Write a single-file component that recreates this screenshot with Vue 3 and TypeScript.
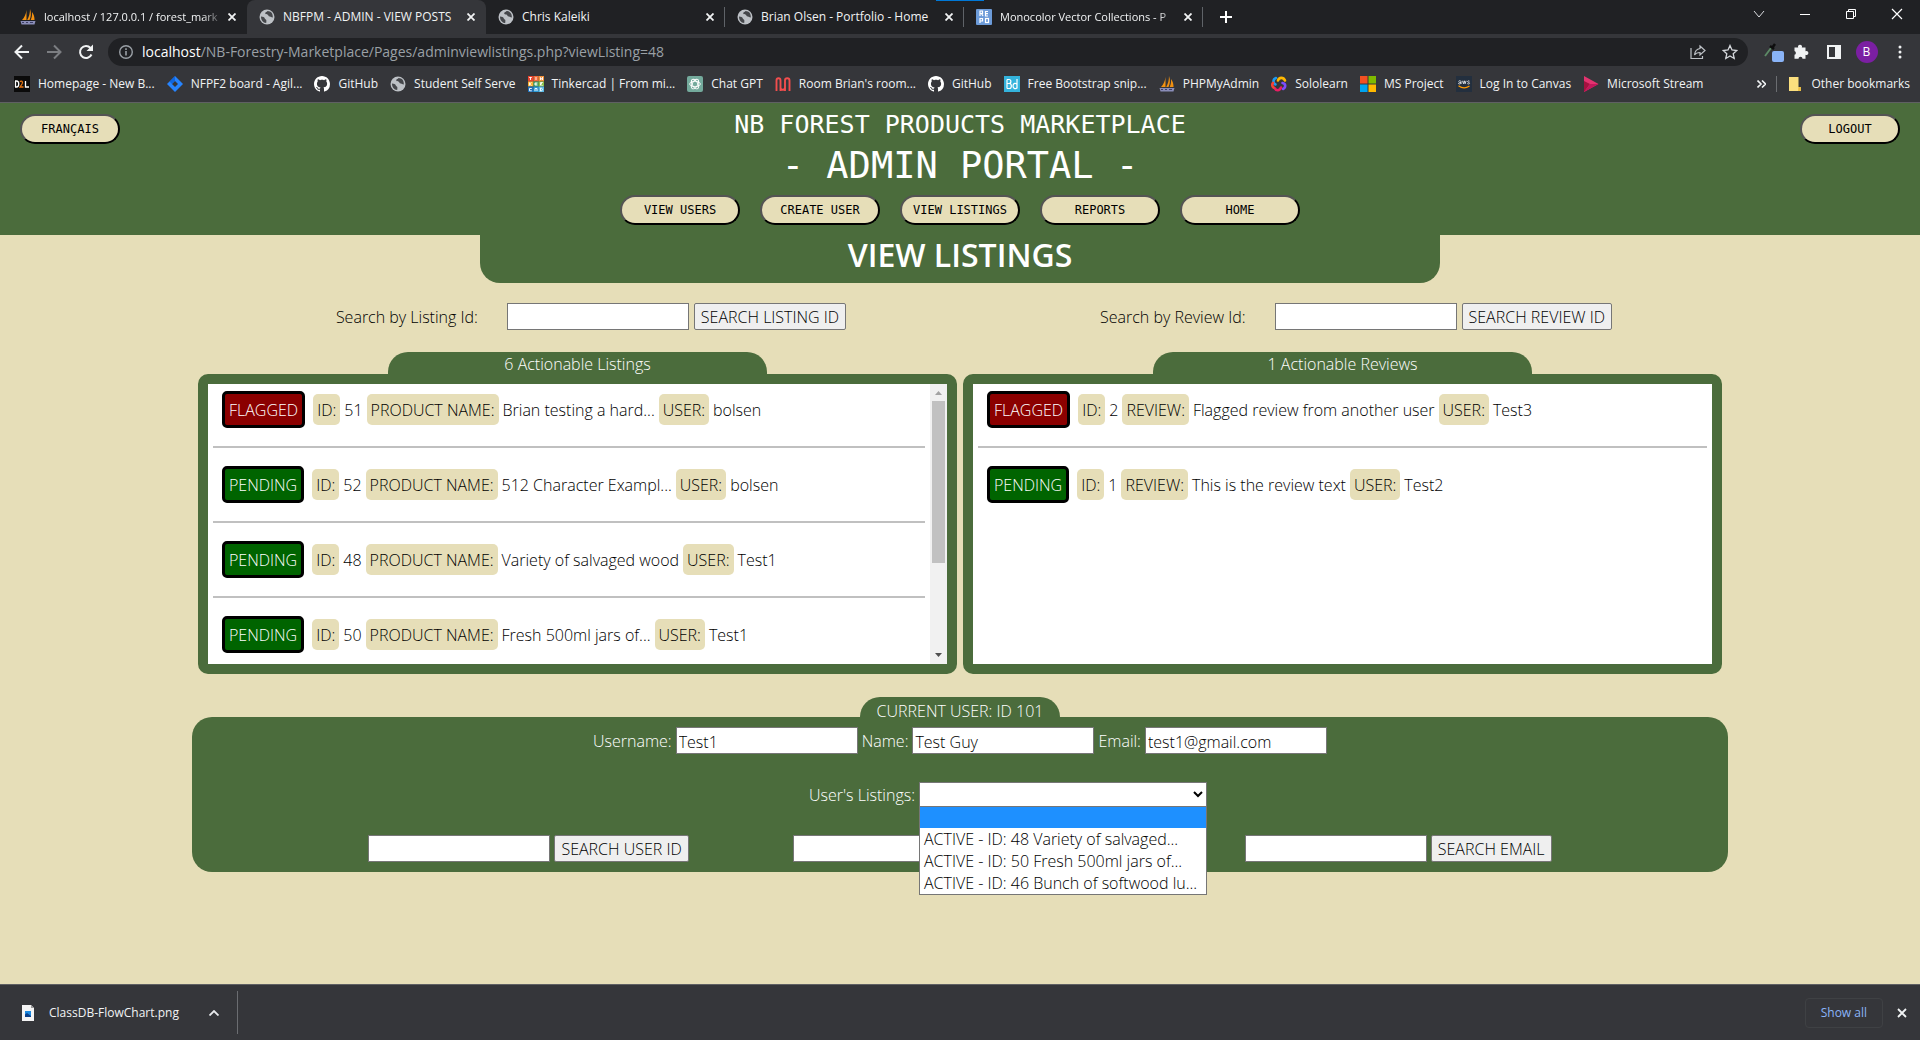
<script setup lang="ts">
import { ref } from 'vue'

interface BrowserTab { title: string; icon: string; active?: boolean; fade?: boolean; divider?: boolean }
interface Bookmark { label: string; icon: string }
interface QueueItem { status: 'FLAGGED' | 'PENDING'; id: number; text: string; user: string }

const tabs: BrowserTab[] = [
  { title: 'localhost / 127.0.0.1 / forest_mark', icon: 'pma', fade: true },
  { title: 'NBFPM - ADMIN - VIEW POSTS', icon: 'globe', active: true },
  { title: 'Chris Kaleiki', icon: 'globe', divider: true },
  { title: 'Brian Olsen - Portfolio - Home', icon: 'globe', divider: true },
  { title: 'Monocolor Vector Collections - P', icon: 'repo', fade: true, divider: true },
]

const bookmarks: Bookmark[] = [
  { label: 'Homepage - New B...', icon: 'd2l' },
  { label: 'NFPF2 board - Agil...', icon: 'jira' },
  { label: 'GitHub', icon: 'github' },
  { label: 'Student Self Serve', icon: 'globe' },
  { label: 'Tinkercad | From mi...', icon: 'tinkercad' },
  { label: 'Chat GPT', icon: 'gpt' },
  { label: "Room Brian's room...", icon: 'room' },
  { label: 'GitHub', icon: 'github' },
  { label: 'Free Bootstrap snip...', icon: 'bd' },
  { label: 'PHPMyAdmin', icon: 'pma' },
  { label: 'Sololearn', icon: 'solo' },
  { label: 'MS Project', icon: 'ms' },
  { label: 'Log In to Canvas', icon: 'aws' },
  { label: 'Microsoft Stream', icon: 'stream' },
]

const navItems = ['VIEW USERS', 'CREATE USER', 'VIEW LISTINGS', 'REPORTS', 'HOME']

const listings: QueueItem[] = [
  { status: 'FLAGGED', id: 51, text: 'Brian testing a hard...', user: 'bolsen' },
  { status: 'PENDING', id: 52, text: '512 Character Exampl...', user: 'bolsen' },
  { status: 'PENDING', id: 48, text: 'Variety of salvaged wood', user: 'Test1' },
  { status: 'PENDING', id: 50, text: 'Fresh 500ml jars of...', user: 'Test1' },
]

const reviews: QueueItem[] = [
  { status: 'FLAGGED', id: 2, text: 'Flagged review from another user', user: 'Test3' },
  { status: 'PENDING', id: 1, text: 'This is the review text', user: 'Test2' },
]

const userListings = [
  '',
  'ACTIVE - ID: 48 Variety of salvaged...',
  'ACTIVE - ID: 50 Fresh 500ml jars of...',
  'ACTIVE - ID: 46 Bunch of softwood lu...',
]

const listingId = ref('')
const reviewId = ref('')
const username = ref('Test1')
const fullName = ref('Test Guy')
const email = ref('test1@gmail.com')
const selected = ref('')
</script>

<template>
  <svg class="sprite" aria-hidden="true">
    <symbol id="globe" viewBox="0 0 16 16">
      <circle cx="8" cy="8" r="7.5" fill="#bdc1c6" />
      <path d="M2 7.5c2 .2 3.400.6 3.800 2 .3 1 1.700.8 1.600 2.200l-.2 2.400C4 13.800 1.900 11 2 7.500zM8.500 2c-.6 1.200-2.200 1-2.300 2.300-.1 1 1.300 1 2.200 1.300 1.300.5.8 1.900 2.400 2 1.300.1 1.500 1 3 .9C14.200 4.800 12 2 8.500 2z" fill="#45474b" />
    </symbol>
    <symbol id="pma" viewBox="0 0 16 16">
      <path d="M6.500 1C6 5 4.500 8.500 2 11h4.500zM10 0c1.500 4 1 8-.5 11H7.200C9 8 10 4 10 0zM12 3c2 2.500 2.600 5.500 2.500 8h-3.800c1.200-2.500 1.500-5 1.300-8z" fill="#f29111" />
      <path d="M.5 12h15l-1 3.500H1.500z" fill="#8a8db8" />
      <path d="M2 13.500h2M6 13.500h2M10 13.500h3" stroke="#3d3f66" />
    </symbol>
    <symbol id="repo" viewBox="0 0 16 16">
      <rect width="16" height="16" rx="1" fill="#6c9bd9" />
      <g fill="none" stroke="#fff" stroke-width="1.200">
        <path d="M4 7V2h2.500v2.500H4M5.500 4.500L7 7M12 2.500H9.500V7H12M9.500 4.700H12M4 14V9.500h2.500V12H4" />
        <rect x="9.500" y="9.500" width="3" height="4" />
      </g>
    </symbol>
    <symbol id="d2l" viewBox="0 0 16 16">
      <rect width="16" height="16" fill="#0b0b0b" />
      <g fill="none" stroke="#fff" stroke-width="1.300"><path d="M1.500 5v6M1 5h1.500c3 0 3 6 0 6H1M11.500 5v6h3.500" /></g>
      <path d="M6 6c1-2 3.500-.5 2 2l-2 3h3.500" fill="none" stroke="#e87511" stroke-width="1.300" />
    </symbol>
    <symbol id="jira" viewBox="0 0 16 16">
      <path d="M8 0l8 8-8 8-8-8z" fill="#2684ff" />
      <path d="M8 5l3 3-3 3-3-3z" fill="#35363a" />
      <path d="M8 0v5L5 8 2.500 5.500z" fill="#0052cc" opacity=".6" />
    </symbol>
    <symbol id="github" viewBox="0 0 16 16">
      <path fill="#fff" d="M8 0C3.580 0 0 3.580 0 8c0 3.540 2.290 6.530 5.470 7.590.4.070.55-.17.55-.38 0-.19-.01-.82-.01-1.490-2.010.37-2.530-.49-2.690-.94-.09-.23-.48-.94-.82-1.130-.28-.15-.68-.52-.01-.53.63-.01 1.080.58 1.230.82.720 1.210 1.870.87 2.330.66.070-.52.280-.87.510-1.070-1.780-.2-3.640-.89-3.640-3.950 0-.87.310-1.590.820-2.150-.08-.2-.36-1.020.08-2.120 0 0 .67-.21 2.200.82.640-.18 1.320-.27 2-.27s1.360.09 2 .27c1.530-1.040 2.200-.82 2.200-.82.440 1.100.160 1.920.08 2.120.510.56.820 1.270.820 2.150 0 3.070-1.870 3.750-3.650 3.950.29.250.540.730.540 1.480 0 1.070-.01 1.930-.01 2.200 0 .21.150.46.550.38A8 8 0 0 0 16 8c0-4.420-3.580-8-8-8z" />
    </symbol>
    <symbol id="tinkercad" viewBox="0 0 16 16">
      <path d="M0 0h5.500v5.500H0z" fill="#e8442e" /><path d="M5.500 0h5v5.500h-5z" fill="#f26b3a" /><path d="M10.500 0H16v5.500h-5.500z" fill="#f2913a" />
      <path d="M0 5.500h5.500v5H0z" fill="#f9b233" /><path d="M5.500 5.500h5v5h-5z" fill="#3fa66b" /><path d="M10.500 5.500H16v5h-5.500z" fill="#8bc34a" />
      <path d="M0 10.500h5.500V16H0z" fill="#1c6fb8" /><path d="M5.500 10.500h5V16h-5z" fill="#2b9cd8" /><path d="M10.500 10.500H16V16h-5.500z" fill="#58b9e6" />
      <path d="M1.200 1.500h2.600M2.500 1.500v2.500M8 1v3M12.500 4V1.500l2 2.500V1M1.500 6.500v3M3.500 6.500l-2 1.500 2 1.500M9.500 7H7v2h2.500M7 8h2M12.500 9.500v-3h2l-2 2 2 1M3.800 12.500H1.500v2.300h2.300M7 15v-2.500h2V15M12.500 12v3h1l1-1.500-1-1.500z" fill="none" stroke="#fff" stroke-width=".9" />
    </symbol>
    <symbol id="gpt" viewBox="0 0 16 16">
      <rect width="16" height="16" rx="2" fill="#74aa9c" />
      <g fill="none" stroke="#fff" stroke-width=".9">
        <ellipse cx="8" cy="8" rx="5.300" ry="2.700" /><ellipse cx="8" cy="8" rx="5.300" ry="2.700" transform="rotate(60 8 8)" /><ellipse cx="8" cy="8" rx="5.300" ry="2.700" transform="rotate(120 8 8)" />
      </g>
    </symbol>
    <symbol id="room" viewBox="0 0 16 16">
      <path d="M1.500 15V4.500c0-3 4-3 4 0v7c0 3 4.500 3 4.500 0v-7c0-3 4.500-3 4.500 0V15M5.500 15V4.500M10 15V4.500" fill="none" stroke="#f24e4e" stroke-width="1.900" />
    </symbol>
    <symbol id="bd" viewBox="0 0 16 16">
      <rect width="16" height="16" fill="#34b3dc" />
      <path d="M3 3.500v9M3 3.500h2c2.500 0 2.500 4 0 4H3h2.400c2.600 0 2.600 5 0 5H3M13 3v9.500M13 8.500c-1-2-4-1.500-4 1.500s3 3.500 4 1.500" fill="none" stroke="#fff" stroke-width="1.200" />
    </symbol>
    <symbol id="solo" viewBox="0 0 16 16">
      <g fill="none" stroke-width="2.600" stroke-linecap="round">
        <path d="M4.500 8.500C1.500 7 2 3 5 2" stroke="#1e9bf0" /><path d="M7 4.500c1-3.500 5.500-3.500 7 0" stroke="#ffb800" />
        <path d="M11.500 7c3.500.5 3.500 4.500.5 6" stroke="#7c4dff" /><path d="M10 11.500c-1.500 3.500-5 3.500-6.500.5" stroke="#e91e63" /><path d="M2.500 11.500C.8 10 1 8 2 7" stroke="#f44336" />
      </g>
    </symbol>
    <symbol id="ms" viewBox="0 0 16 16">
      <path d="M0 0h7.500v7.500H0z" fill="#f25022" /><path d="M8.500 0H16v7.500H8.500z" fill="#7fba00" /><path d="M0 8.500h7.500V16H0z" fill="#00a4ef" /><path d="M8.500 8.500H16V16H8.500z" fill="#ffb900" />
    </symbol>
    <symbol id="aws" viewBox="0 0 16 16">
      <rect width="16" height="16" fill="#232f3e" />
      <path d="M5 8V5.500c0-1-2.500-1-2.500 0M5 6.500c-3-.3-3 1.700-1.500 1.500.8 0 1.500-.5 1.500-1M6.500 4.800l1 3 .8-3 .8 3 1-3M13.500 5.200c-1-.8-2.200-.2-1.800.7.3.6 1.800.4 1.800 1.300 0 1-1.500 1-2.200.3" fill="none" stroke="#dfe3e8" stroke-width=".9" />
      <path d="M2.500 9.800c3.500 2.600 7.500 2.600 11 .3" fill="none" stroke="#ff9900" stroke-width="1.200" />
    </symbol>
    <symbol id="stream" viewBox="0 0 16 16">
      <path d="M1 0l14.500 8L1 16z" fill="#e3336f" /><path d="M1 5l6 3-6 8z" fill="#a4123f" /><path d="M7 8h8.500L1 16z" fill="#c2185b" />
    </symbol>
  </svg>

  <div class="screen">
    <header class="chrome">
      <div class="tabstrip">
        <div v-for="(tab, i) in tabs" :key="i" class="tab" :class="{ active: tab.active, divider: tab.divider }">
          <svg class="fav"><use :href="'#' + tab.icon" /></svg>
          <span class="tab-title" :class="{ fade: tab.fade }">{{ tab.title }}</span>
          <button class="plain" aria-label="Close tab">
            <svg width="8" height="8" viewBox="0 0 8 8"><path d="M0.500 0.500l7 7M7.500 0.500l-7 7" stroke="#f1f3f4" stroke-width="1.800" /></svg>
          </button>
        </div>
        <button class="plain new-tab" aria-label="New tab">
          <svg width="12" height="12" viewBox="0 0 12 12"><path d="M6 0v12M0 6h12" stroke="#fff" stroke-width="2" /></svg>
        </button>
        <span class="drag-mark"></span>
        <div class="window-buttons">
          <button class="plain" aria-label="Search tabs"><svg width="12" height="12" viewBox="0 0 12 12"><path d="M1 3l5 6 5-6" fill="none" stroke="#dadce0" /></svg></button>
          <button class="plain" aria-label="Minimize"><svg width="12" height="12" viewBox="0 0 12 12"><path d="M1 6.500h10" stroke="#fff" /></svg></button>
          <button class="plain" aria-label="Restore"><svg width="12" height="12" viewBox="0 0 12 12"><path d="M1.500 3.500h7v7h-7zM3.500 3V1.500h7v7H9" fill="none" stroke="#fff" /></svg></button>
          <button class="plain" aria-label="Close window"><svg width="12" height="12" viewBox="0 0 12 12"><path d="M1 1l10 10M11 1L1 11" stroke="#fff" stroke-width="1.200" /></svg></button>
        </div>
      </div>

      <div class="toolbar">
        <button class="plain" aria-label="Back"><svg width="16" height="16" viewBox="0 0 16 16"><path d="M15 8H2M8 1.500L1.500 8 8 14.500" fill="none" stroke="#f1f3f4" stroke-width="2" /></svg></button>
        <button class="plain" aria-label="Forward"><svg width="16" height="16" viewBox="0 0 16 16"><path d="M1 8h13M8 1.500L14.500 8 8 14.500" fill="none" stroke="#7c7e82" stroke-width="2" /></svg></button>
        <button class="plain" aria-label="Reload"><svg width="16" height="16" viewBox="0 0 16 16"><path d="M13.500 10.500A6 6 0 1 1 12.500 4" fill="none" stroke="#f1f3f4" stroke-width="2" /><path d="M15 0.500V7H8.500z" fill="#f1f3f4" /></svg></button>
        <div class="omnibox">
          <svg width="16" height="16" viewBox="0 0 16 16"><circle cx="8" cy="8" r="6.300" fill="none" stroke="#9aa0a6" stroke-width="1.400" /><path d="M8 7v4.500M8 4.300v1.600" stroke="#9aa0a6" stroke-width="1.600" /></svg>
          <span class="url"><b>localhost</b>/NB-Forestry-Marketplace/Pages/adminviewlistings.php?viewListing=48</span>
          <svg width="16" height="16" viewBox="0 0 16 16"><path d="M1 4v10.500h11.500V12" fill="none" stroke="#bdc1c6" stroke-width="1.200" /><path d="M10 2l5 4.500-5 4.500V8.500C7.500 8.500 5.500 9.500 4.500 11c.3-3.500 2.500-6 5.500-6.500z" fill="none" stroke="#bdc1c6" stroke-width="1.200" /></svg>
          <svg width="16" height="16" viewBox="0 0 16 16"><path d="M8 1.500l2 4.500 4.800.5-3.600 3.200 1 4.800L8 12l-4.200 2.500 1-4.800L1.200 6.500 6 6z" fill="none" stroke="#d5d8dc" stroke-width="1.300" /></svg>
        </div>
        <div class="extensions">
          <button class="plain picker" aria-label="Color picker"><svg width="20" height="20" viewBox="0 0 20 20"><path d="M1 14l6-8" stroke="#5d8a66" stroke-width="1.800" /><path d="M6 4l4 3M8 6l3-4" stroke="#0d0d0d" stroke-width="2.500" /><rect x="8" y="9" width="12" height="11" rx="2" fill="#8ab4f8" /></svg></button>
          <button class="plain" aria-label="Extensions"><svg width="16" height="16" viewBox="0 0 16 16"><path d="M1.500 3.500h3.700a2 2 0 1 1 3.600 0H12.500v3.700a2 2 0 1 1 0 3.600v4H9.500a2 2 0 0 0-4 0h-4v-4a2 2 0 0 0 0-3.800z" fill="#f1f3f4" /></svg></button>
          <button class="plain" aria-label="Side panel"><svg width="14" height="14" viewBox="0 0 14 14"><path d="M0 0h14v14H0zM2 2v10h6V2z" fill="#f1f3f4" fill-rule="evenodd" /></svg></button>
          <button class="plain" aria-label="Profile"><span class="avatar">B</span></button>
          <button class="plain" aria-label="Menu"><svg width="4" height="14" viewBox="0 0 4 14"><circle cx="2" cy="2" r="1.500" fill="#f1f3f4" /><circle cx="2" cy="7" r="1.500" fill="#f1f3f4" /><circle cx="2" cy="12" r="1.500" fill="#f1f3f4" /></svg></button>
        </div>
      </div>

      <nav class="bookmarks">
        <a v-for="(mark, i) in bookmarks" :key="i" href="#" class="bookmark">
          <svg class="fav"><use :href="'#' + mark.icon" /></svg>{{ mark.label }}
        </a>
        <div class="other">
          <svg width="9" height="8" viewBox="0 0 9 8"><path d="M0.500 0.500L4 4 .5 7.500M5 .5L8.500 4 5 7.500" fill="none" stroke="#f1f3f4" stroke-width="1.600" /></svg>
          <span class="rule"></span>
          <a href="#" class="bookmark">
            <svg class="fav" viewBox="0 0 16 16"><path d="M2 1h9.500v10H14v4H2z" fill="#fbdf7e" /><path d="M11.500 11H14v4h-3z" fill="#e9bd45" /></svg>Other bookmarks
          </a>
        </div>
      </nav>
    </header>

    <main class="page">
      <header class="banner">
        <button class="pill side">FRANÇAIS</button>
        <div class="banner-center">
          <h1>NB FOREST PRODUCTS MARKETPLACE</h1>
          <p class="portal">- ADMIN PORTAL -</p>
          <nav class="menu">
            <button v-for="item in navItems" :key="item" class="pill">{{ item }}</button>
          </nav>
        </div>
        <button class="pill side">LOGOUT</button>
      </header>
      <h2 class="page-title">VIEW LISTINGS</h2>

      <div class="columns">
        <section class="column">
          <form class="search" @submit.prevent>
            <label for="listing-id">Search by Listing Id:</label>
            <input id="listing-id" v-model="listingId" class="field" type="text" />
            <button class="action">SEARCH LISTING ID</button>
          </form>
          <h3 class="panel-tab">6 Actionable Listings</h3>
          <div class="panel">
            <ul class="queue">
              <li v-for="item in listings" :key="item.id">
                <button class="status" :class="item.status.toLowerCase()">{{ item.status }}</button>
                <span class="chip">ID:</span><span>{{ item.id }}</span>
                <span class="chip">PRODUCT NAME:</span><span>{{ item.text }}</span>
                <span class="chip">USER:</span><span>{{ item.user }}</span>
              </li>
            </ul>
            <div class="scrollbar">
              <svg width="7" height="4" viewBox="0 0 7 4"><path d="M0 4l3.500-4L7 4z" fill="#a3a3a3" /></svg>
              <span class="thumb"></span>
              <svg class="down" width="7" height="4" viewBox="0 0 7 4"><path d="M0 0l3.500 4L7 0z" fill="#505050" /></svg>
            </div>
          </div>
        </section>

        <section class="column">
          <form class="search" @submit.prevent>
            <label for="review-id">Search by Review Id:</label>
            <input id="review-id" v-model="reviewId" class="field" type="text" />
            <button class="action">SEARCH REVIEW ID</button>
          </form>
          <h3 class="panel-tab">1 Actionable Reviews</h3>
          <div class="panel">
            <ul class="queue">
              <li v-for="item in reviews" :key="item.id">
                <button class="status" :class="item.status.toLowerCase()">{{ item.status }}</button>
                <span class="chip">ID:</span><span>{{ item.id }}</span>
                <span class="chip">REVIEW:</span><span>{{ item.text }}</span>
                <span class="chip">USER:</span><span>{{ item.user }}</span>
              </li>
            </ul>
          </div>
        </section>
      </div>

      <section class="user">
        <h3 class="user-tab">CURRENT USER: ID 101</h3>
        <div class="user-panel">
          <div class="line">
            <label for="username">Username:</label><input id="username" v-model="username" class="field" type="text" />
            <label for="full-name">Name:</label><input id="full-name" v-model="fullName" class="field" type="text" />
            <label for="email">Email:</label><input id="email" v-model="email" class="field" type="text" />
          </div>
          <div class="line picker-line">
            <label for="user-listings">User's Listings:</label>
            <div class="dropdown">
              <select id="user-listings" v-model="selected">
                <option v-for="option in userListings" :key="option" :value="option">{{ option }}</option>
              </select>
              <ul class="options">
                <li v-for="option in userListings" :key="option" :class="{ current: option === selected }">{{ option }}</li>
              </ul>
            </div>
          </div>
          <div class="line searches">
            <form class="line" @submit.prevent>
              <input class="field" type="text" aria-label="User ID" />
              <button class="action">SEARCH USER ID</button>
            </form>
            <form class="line" @submit.prevent>
              <input class="field" type="text" aria-label="Username" />
              <button class="action covered" aria-label="Search username"></button>
            </form>
            <form class="line" @submit.prevent>
              <input class="field" type="text" aria-label="Email" />
              <button class="action">SEARCH EMAIL</button>
            </form>
          </div>
        </div>
      </section>
    </main>

    <footer class="downloads">
      <svg width="12" height="16" viewBox="0 0 12 16"><path d="M0 0h9l3 3v13H0z" fill="#f4f4f4" /><path d="M9 0v3h3z" fill="#9a9a9a" /><path d="M3 6h6v6H3z" fill="#1c8ae0" /><path d="M3 12V9.500L5 8l4 3v1z" fill="#0b3f8a" /></svg>
      <span class="file">ClassDB-FlowChart.png</span>
      <button class="plain" aria-label="File options"><svg width="10" height="6" viewBox="0 0 10 6"><path d="M0.500 5.500L5 1l4.500 4.500" fill="none" stroke="#e8eaed" stroke-width="1.800" /></svg></button>
      <span class="rule"></span>
      <button class="show-all">Show all</button>
      <button class="plain" aria-label="Close downloads"><svg width="10" height="10" viewBox="0 0 10 10"><path d="M1 1l8 8M9 1L1 9" stroke="#f1f3f4" stroke-width="1.800" /></svg></button>
    </footer>
  </div>
</template>

<style>
body {
  margin: 0;
}
</style>

<style scoped>
.sprite {
  position: absolute;
  width: 0;
  height: 0;
}

.screen {
  display: flex;
  flex-direction: column;
  min-height: 100vh;
  background: #e6deb8;
  font-family: "Open Sans", "Noto Sans", sans-serif;
  font-size: 16px;
  font-weight: 300;
  line-height: 21px;
  color: #000;
}

*,
*::before,
*::after {
  box-sizing: border-box;
}

button,
input,
select {
  font: inherit;
  color: inherit;
}

h1,
h2,
h3,
p,
ul {
  margin: 0;
  padding: 0;
  list-style: none;
}

.plain {
  display: flex;
  align-items: center;
  justify-content: center;
  flex: none;
  padding: 0;
  border: 0;
  background: none;
}

/* Browser chrome */
.chrome {
  border-bottom: 1px solid #5f6063;
  background: #35363a;
  color: #f1f3f4;
  font-size: 12px;
  font-weight: 400;
  line-height: 16px;
}

.tabstrip {
  position: relative;
  display: flex;
  height: 34px;
  padding-left: 8px;
  background: #202124;
}

.tab {
  position: relative;
  display: flex;
  align-items: center;
  gap: 8px;
  width: 239px;
  padding: 0 11px 0 12px;
}

.tab.active {
  border-radius: 8px 8px 0 0;
  background: #35363a;
}

.tab.divider::after {
  content: "";
  position: absolute;
  top: 7px;
  right: 0;
  width: 1px;
  height: 20px;
  background: #5f6368;
}

.fav {
  flex: none;
  width: 16px;
  height: 16px;
}

.tab-title {
  flex: 1;
  overflow: hidden;
  white-space: nowrap;
}

.tab-title.fade {
  margin-right: -4px;
  font-size: 11px;
  mask-image: linear-gradient(to right, #000 88%, transparent);
}

.new-tab {
  width: 46px;
}

.drag-mark {
  position: absolute;
  top: 0;
  left: 936px;
  width: 48px;
  height: 1px;
  background: #0078d7;
}

.window-buttons {
  display: flex;
  height: 28px;
  margin-left: auto;
}

.window-buttons .plain {
  width: 46px;
}

.toolbar {
  display: flex;
  align-items: center;
  height: 36px;
  padding: 0 4px 0 6px;
}

.toolbar > .plain {
  width: 32px;
}

.omnibox {
  display: flex;
  flex: 1;
  align-items: center;
  gap: 16px;
  height: 28px;
  margin: 0 3px 0 6px;
  padding: 0 10px;
  border-radius: 14px;
  background: #202124;
}

.url {
  flex: 1;
  margin-left: -8px;
  color: #9aa0a6;
  font-size: 14px;
}

.url b {
  color: #fff;
  font-weight: 400;
}

.extensions {
  display: flex;
}

.extensions .plain {
  width: 33px;
}

.extensions .picker {
  justify-content: flex-end;
}

.avatar {
  width: 22px;
  height: 22px;
  border-radius: 11px;
  background: #7b1fa2;
  color: #fff;
  line-height: 22px;
  text-align: center;
}

.bookmarks {
  display: flex;
  align-items: center;
  gap: 12px;
  height: 32px;
  padding: 0 10px 4px 14px;
}

.bookmark {
  display: flex;
  align-items: center;
  gap: 8px;
  color: #f1f3f4;
  text-decoration: none;
  white-space: nowrap;
}

.other {
  display: flex;
  align-items: center;
  gap: 10px;
  margin-left: auto;
}

.rule {
  width: 1px;
  height: 16px;
  background: #6b6d71;
}

/* Marketplace page */
.page {
  flex: 1;
}

.banner {
  display: flex;
  align-items: flex-start;
  justify-content: space-between;
  height: 132px;
  padding: 11px 20px 0;
  background: #4b6c3c;
  color: #fff;
}

.banner-center {
  display: flex;
  flex-direction: column;
  align-items: center;
  font-family: "DejaVu Sans Mono", monospace;
  text-align: center;
}

h1 {
  font-size: 25px;
  font-weight: 400;
  line-height: 22px;
}

.portal {
  margin-top: 8px;
  font-size: 37px;
  line-height: 44px;
}

.menu {
  display: flex;
  gap: 20px;
  margin-top: 7px;
}

.pill {
  width: 120px;
  height: 30px;
  padding: 0;
  border: 2px outset #000;
  border-radius: 15px;
  background: #e6deb8;
  color: #000;
  font-family: "DejaVu Sans Mono", monospace;
  font-size: 12px;
  font-weight: 400;
}

.pill.side {
  width: 100px;
}

.page-title {
  width: 50%;
  height: 48px;
  margin: 0 auto;
  border-radius: 0 0 20px 20px;
  background: #4b6c3c;
  color: #fff;
  font-size: 32px;
  font-weight: 600;
  line-height: 40px;
  text-align: center;
}

.columns {
  display: flex;
  gap: 6px;
  width: 80%;
  margin: 20px auto 0;
  padding: 0 6px;
}

.column {
  flex: 1;
}

.search {
  display: flex;
  align-items: center;
  justify-content: center;
  gap: 5px;
  padding-left: 27px;
}

.search label {
  margin-right: 24px;
}

label {
  padding-top: 2px;
}

.field {
  width: 182px;
  height: 27px;
  padding: 2px 2px 0;
  border: 1px solid #767676;
  background: #fff;
  color: #000;
}

.action {
  height: 27px;
  padding: 2px 6px 0;
  border: 1px solid #767676;
  border-radius: 2px;
  background: #efefef;
  color: #000;
}

.covered {
  width: 162px;
}

.panel-tab {
  width: 50%;
  height: 22px;
  margin: 22px auto 0;
  border-radius: 20px 20px 0 0;
  background: #4b6c3c;
  color: #fff;
  font-size: 16px;
  font-weight: 300;
  line-height: 24px;
  text-align: center;
}

.panel {
  display: flex;
  height: 300px;
  overflow: hidden;
  border: 10px solid #4b6c3c;
  border-radius: 10px;
  background: #fff;
}

.queue {
  flex: 1;
  padding: 7px 5px 0;
}

.queue li {
  display: flex;
  align-items: center;
  gap: 4px;
  padding: 0 9px 18px;
}

.queue li + li {
  padding-top: 18px;
  border-top: 2px solid #c0c0c0;
}

.queue span {
  padding: 6px 0 4px;
}

.queue .chip {
  padding: 6px 4px 4px;
  border-radius: 5px;
  background: #e6deb8;
}

.status {
  height: 37px;
  margin-right: 4px;
  padding: 2px 4px 0;
  border: 3px solid #000;
  border-radius: 5px;
  color: #fff;
}

.flagged {
  background: #8b0000;
}

.pending {
  background: #006400;
}

.scrollbar {
  display: flex;
  flex-direction: column;
  align-items: center;
  width: 17px;
  padding: 7px 0;
  background: #f1f1f1;
}

.thumb {
  width: 13px;
  height: 162px;
  margin-top: 6px;
  background: #c1c1c1;
}

.down {
  margin-top: auto;
}

.user {
  width: 80%;
  margin: 23px auto 0;
  color: #fff;
}

.user-tab {
  width: 200px;
  height: 20px;
  margin: 0 auto;
  border-radius: 20px 20px 0 0;
  background: #4b6c3c;
  font-size: 16px;
  font-weight: 300;
  line-height: 28px;
  text-align: center;
}

.user-panel {
  display: flex;
  flex-direction: column;
  gap: 28px;
  padding: 10px;
  border-radius: 20px;
  background: #4b6c3c;
}

.line {
  display: flex;
  align-items: center;
  justify-content: center;
  gap: 4px;
}

.picker-line {
  padding-left: 96px;
}

.searches {
  gap: 104px;
}

.dropdown {
  position: relative;
}

select {
  display: block;
  width: 288px;
  height: 25px;
  border: 1px solid #767676;
  background: #fff;
  color: #000;
}

.options {
  position: absolute;
  top: 24px;
  left: 0;
  z-index: 1;
  width: 288px;
  border: 1px solid #767676;
  background: #fff;
  color: #000;
}

.options li {
  height: 22px;
  padding: 0 4px;
  line-height: 22px;
}

.options .current {
  height: 21px;
  background: #1e90ff;
}

/* Downloads shelf */
.downloads {
  display: flex;
  align-items: center;
  height: 56px;
  padding: 0 13px 0 22px;
  border-top: 1px solid #5f6063;
  background: #35363a;
  color: #f1f3f4;
  font-size: 12px;
  font-weight: 400;
}

.file {
  margin: 0 30px 0 15px;
}

.downloads .rule {
  height: 43px;
  margin-left: 18px;
}

.show-all {
  height: 30px;
  margin: 0 14px 0 auto;
  padding: 0 15px;
  border: 1px solid #3f4144;
  border-radius: 4px;
  background: none;
  color: #8ab4f8;
}
</style>
